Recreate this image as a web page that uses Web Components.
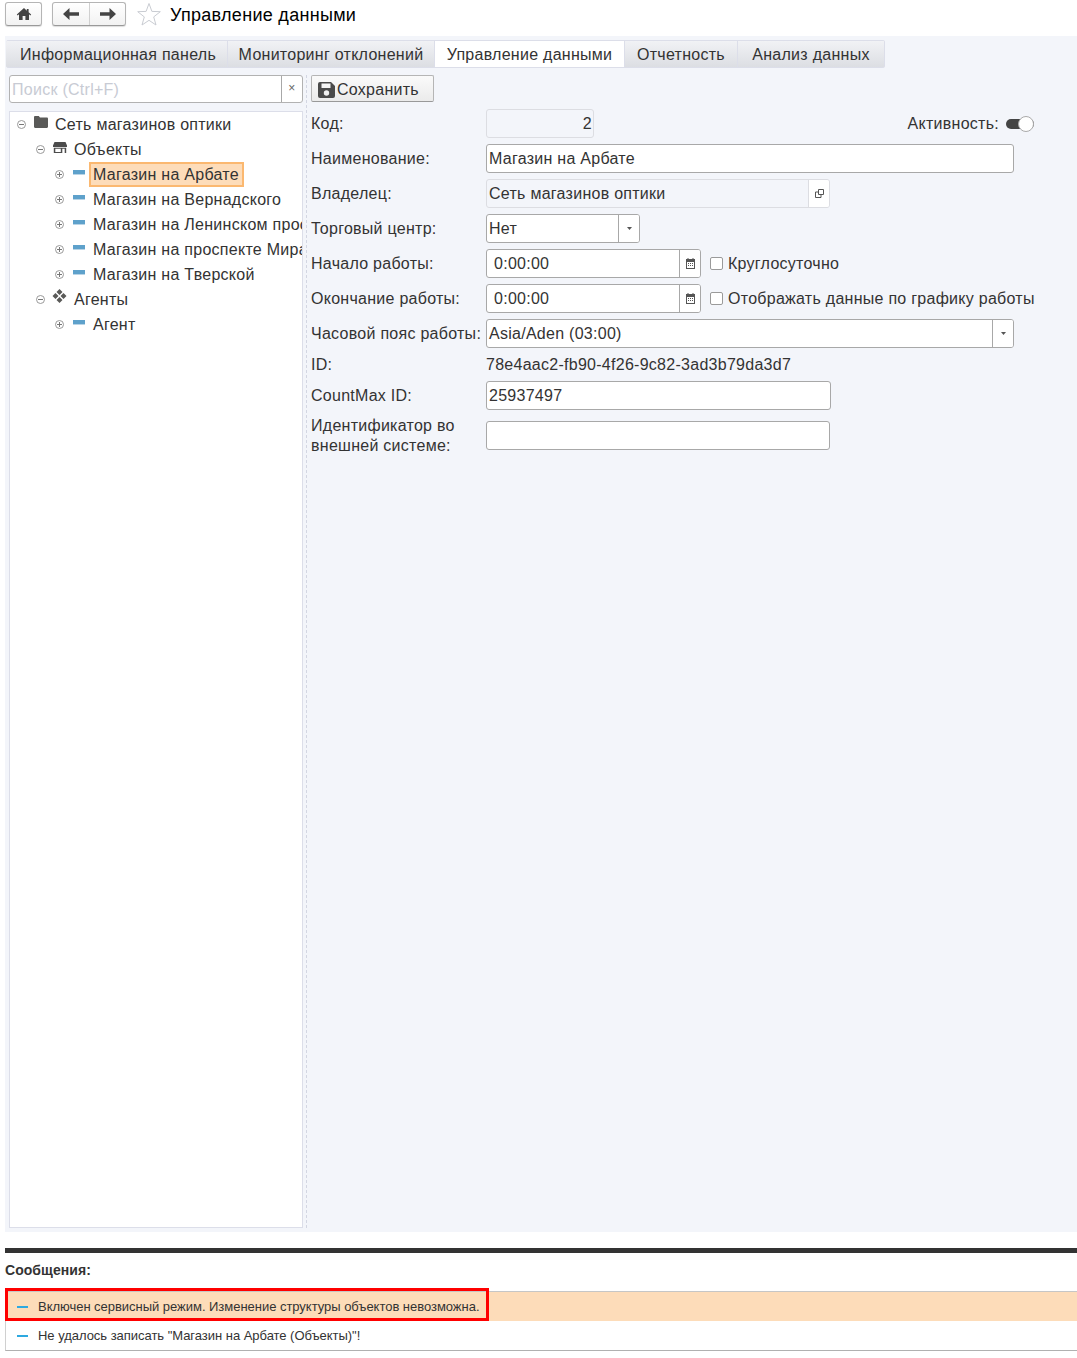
<!DOCTYPE html>
<html lang="ru">
<head>
<meta charset="utf-8">
<title>Управление данными</title>
<style>
  html, body { margin: 0; padding: 0; background: #fff; }
  body { width: 1077px; height: 1358px; overflow: hidden; font: 16px "Liberation Sans", Arial, sans-serif; letter-spacing: .27px; color: #333; }
</style>
</head>
<body>
<app-page>
  <top-bar slot="top" title-text="Управление данными"></top-bar>
  <section-tabs slot="tabs">
    <section-tab w="222" pad="3">Информационная панель</section-tab>
    <section-tab w="207">Мониторинг отклонений</section-tab>
    <section-tab w="190" active>Управление данными</section-tab>
    <section-tab w="113">Отчетность</section-tab>
    <section-tab w="147">Анализ данных</section-tab>
  </section-tabs>
  <search-box slot="left-top"></search-box>
  <tree-panel slot="left">
    <tree-node icon="folder" label="Сеть магазинов оптики" open>
      <tree-node icon="store" label="Объекты" open>
        <tree-node icon="dash" label="Магазин на Арбате" selected></tree-node>
        <tree-node icon="dash" label="Магазин на Вернадского"></tree-node>
        <tree-node icon="dash" label="Магазин на Ленинском проспекте"></tree-node>
        <tree-node icon="dash" label="Магазин на проспекте Мира"></tree-node>
        <tree-node icon="dash" label="Магазин на Тверской"></tree-node>
      </tree-node>
      <tree-node icon="diamonds" label="Агенты" open>
        <tree-node icon="dash" label="Агент"></tree-node>
      </tree-node>
    </tree-node>
  </tree-panel>
  <save-button slot="right-top">Сохранить</save-button>
  <data-form slot="right">
    <form-row label="Код:">
      <text-field w="108" align="right" disabled value="2"></text-field>
      <activity-switch slot="extra">Активность:</activity-switch>
    </form-row>
    <form-row label="Наименование:"><text-field w="528" value="Магазин на Арбате"></text-field></form-row>
    <form-row label="Владелец:"><text-field w="344" disabled value="Сеть магазинов оптики" btn="open"></text-field></form-row>
    <form-row label="Торговый центр:"><text-field w="154" value="Нет" btn="drop"></text-field></form-row>
    <form-row label="Начало работы:">
      <text-field w="215" indent value="0:00:00" btn="cal"></text-field>
      <check-field slot="extra">Круглосуточно</check-field>
    </form-row>
    <form-row label="Окончание работы:">
      <text-field w="215" indent value="0:00:00" btn="cal"></text-field>
      <check-field slot="extra">Отображать данные по графику работы</check-field>
    </form-row>
    <form-row label="Часовой пояс работы:"><text-field w="528" value="Asia/Aden (03:00)" btn="drop"></text-field></form-row>
    <form-row label="ID:" plain>78e4aac2-fb90-4f26-9c82-3ad3b79da3d7</form-row>
    <form-row label="CountMax ID:"><text-field w="345" value="25937497"></text-field></form-row>
    <form-row label="Идентификатор во внешней системе:" tall><text-field w="344" value=""></text-field></form-row>
  </data-form>
  <message-panel slot="bottom">
    <message-row hot>Включен сервисный режим. Изменение структуры объектов невозможна.</message-row>
    <message-row>Не удалось записать "Магазин на Арбате (Объекты)"!</message-row>
  </message-panel>
</app-page>

<script>
const ICONS = {
  home: '<svg width="16" height="14" viewBox="0 0 16 14"><path fill="#444" d="M8 1 .8 7.400l.9 1L3 7.300V13h3.600V9h2.800v4H13V7.300l1.300 1.100.9-1L12.600 5.300V2h-1.800v1.700z"/></svg>',
  back: '<svg width="16" height="12" viewBox="0 0 16 12"><path fill="#444" d="M6.500 0 0 6l6.500 6V7.700H16V4.300H6.500z"/></svg>',
  forward: '<svg width="16" height="12" viewBox="0 0 16 12"><path fill="#444" d="M9.500 0 16 6l-6.500 6V7.700H0V4.300h9.500z"/></svg>',
  star: '<svg width="24" height="24" viewBox="0 0 24 24"><path fill="#fff" stroke="#c9ccd2" d="m12 1.500 2.900 7.900 8.400.3-6.600 5.200 2.300 8.100L12 18.300 5 23l2.300-8.100L.7 9.700l8.400-.3z"/></svg>',
  save: '<svg width="17" height="16" viewBox="0 0 17 16"><path fill="#4a4a4a" fill-rule="evenodd" d="M2 0h11l4 4v10a2 2 0 0 1-2 2H2a2 2 0 0 1-2-2V2a2 2 0 0 1 2-2zm1.500 1.500V6h9V1.500zM8.500 8.300a2.700 2.700 0 1 0 0 5.400 2.700 2.700 0 0 0 0-5.400z"/></svg>',
  folder: '<svg width="14" height="12" viewBox="0 0 14 12"><path fill="#5a5a58" d="M0 1.200C0 .5.500 0 1.200 0h3.600l1.200 1.500h6.800c.7 0 1.200.5 1.200 1.200v8c0 .7-.5 1.200-1.200 1.200H1.200C.5 11.900 0 11.400 0 10.700z"/></svg>',
  store: '<svg width="14" height="11" viewBox="0 0 14 11"><path fill="#4c4c4c" fill-rule="evenodd" d="M1.500 0h11L14 3.500V5H0V3.500zM.8 5.800h12.400V11H.8zM2.300 6.800V10h5.500V6.800zm7 0V11h2.400V6.800z"/></svg>',
  diamonds: '<svg width="15" height="14" viewBox="0 0 15 14"><path fill="#5a5a58" d="m7.500 0 3 3-3 3-3-3zM3.500 4l3 3-3 3-3-3zM11.500 4l3 3-3 3-3-3zM7.500 8l3 3-3 3-3-3z"/></svg>',
  dash: '<svg width="12" height="5" viewBox="0 0 12 5" style="margin-left:1px"><rect width="12" height="4" y="0" fill="#5ea1cb"/><rect width="12" height="1" y="4" fill="#b9d4e6"/></svg>',
  plus: '<svg width="9" height="9" viewBox="0 0 9 9"><circle cx="4.500" cy="4.500" r="4" fill="#fff" stroke="#999"/><path stroke="#777" d="M2 4.500h5M4.500 2v5"/></svg>',
  minus: '<svg width="9" height="9" viewBox="0 0 9 9"><circle cx="4.500" cy="4.500" r="4" fill="#fff" stroke="#999"/><path stroke="#777" d="M2 4.500h5"/></svg>',
  drop: '<svg width="5" height="3" viewBox="0 0 5 3"><path fill="#555" d="M0 0h5L2.500 3z"/></svg>',
  cal: '<svg width="9" height="11" viewBox="0 0 9 11"><path fill="#555" fill-rule="evenodd" d="M1.500 0h1v1h4V0h1v1H9v10H0V1h1.500zM1 4v6h7V4z"/><path fill="#555" d="M2 5h1v1H2zM4 5h1v1H4zM6 5h1v1H6zM2 7h1v1H2zM4 7h1v1H4zM6 7h1v1H6z"/></svg>',
  open: '<svg width="9" height="9" viewBox="0 0 9 9"><path fill="none" stroke="#555" d="M3.500.5h5v5h-5zM3.500 3H.5v5.500H6V5.500"/></svg>',
};

const ICON_TOP = { dash: 8, diamonds: 2, store: 5, folder: 4 };

class AppPage extends HTMLElement {
  constructor() {
    super();
    this.attachShadow({ mode: 'open' });
    this.shadowRoot.innerHTML = `
      <style>
        :host { display: flex; flex-direction: column; width: 1077px; height: 1358px; }
        .work {
          margin: 0 0 0 5px;
          height: 1196px;
          background: #f3f5fa;
          padding: 4px 0 4px 1px;
          box-sizing: border-box;
          display: flex;
          flex-direction: column;
        }
        .split {
          flex: 1;
          min-height: 0;
          margin-top: 7px;
          display: grid;
          grid-template-columns: 294px 1fr;
          column-gap: 8px;
          padding-left: 3px;
        }
        .left { display: flex; flex-direction: column; gap: 8px; min-height: 0; }
        .right {
          display: flex;
          flex-direction: column;
          gap: 7px;
          border-left: 1px dashed #d3d6e2;
          margin-left: -5px;
          padding-left: 4px;
        }
      </style>
      <slot name="top"></slot>
      <div class="work">
        <slot name="tabs"></slot>
        <div class="split">
          <div class="left"><slot name="left-top"></slot><slot name="left"></slot></div>
          <div class="right"><slot name="right-top"></slot><slot name="right"></slot></div>
        </div>
      </div>
      <slot name="bottom"></slot>
    `;
  }
}

class TopBar extends HTMLElement {
  constructor() {
    super();
    this.attachShadow({ mode: 'open' });
    this.shadowRoot.innerHTML = `
      <style>
        :host { display: flex; align-items: center; height: 36px; box-sizing: border-box; padding: 0 0 8px 5px; }
        .btn {
          display: flex;
          align-items: center;
          height: 24px;
          border: 1px solid #b5b5b5;
          border-bottom-color: #999;
          border-radius: 3px;
          box-sizing: border-box;
          background: linear-gradient(#fff, #f2f2f2);
          box-shadow: 0 1px 1px #ddd;
        }
        .cell { display: flex; align-items: center; justify-content: center; height: 100%; box-sizing: border-box; }
        .home { width: 37px; margin-right: 10px; }
        .home .cell { width: 100%; }
        .nav .cell { width: 36px; }
        .nav .cell + .cell { border-left: 1px solid #d0d0d0; }
        .star { margin: 0 9px 0 11px; display: flex; }
        .title { font-size: 18px; letter-spacing: .3px; color: #000; margin-top: 2px; }
        svg { display: block; }
      </style>
      <div class="btn home"><span class="cell">${ICONS.home}</span></div>
      <div class="btn nav"><span class="cell">${ICONS.back}</span><span class="cell">${ICONS.forward}</span></div>
      <span class="star">${ICONS.star}</span>
      <span class="title">${this.getAttribute('title-text')}</span>
    `;
  }
}

class SectionTabs extends HTMLElement {
  constructor() {
    super();
    this.attachShadow({ mode: 'open' });
    this.shadowRoot.innerHTML = `
      <style>
        :host { display: block; }
        .bar { display: inline-flex; height: 28px; border-radius: 3px; overflow: hidden; box-shadow: inset 0 0 0 1px #dcdee9; }
      </style>
      <div class="bar"><slot></slot></div>
    `;
  }
}

class SectionTab extends HTMLElement {
  constructor() {
    super();
    this.attachShadow({ mode: 'open' });
    const active = this.hasAttribute('active');
    this.shadowRoot.innerHTML = `
      <style>
        :host {
          display: flex;
          align-items: center;
          justify-content: center;
          box-sizing: border-box;
          width: ${this.getAttribute('w')}px;
          height: 28px;
          padding: 2px 0 0 ${this.getAttribute('pad') || 0}px;
          white-space: nowrap;
          font-size: 16px;
          border: 1px solid #dcdee9;
          border-left-width: 0;
          background: ${active ? '#fff' : 'linear-gradient(#f1f2f5, #dcdee3)'};
        }
      </style>
      <slot></slot>
    `;
  }
}

class SearchBox extends HTMLElement {
  constructor() {
    super();
    this.attachShadow({ mode: 'open' });
    this.shadowRoot.innerHTML = `
      <style>
        :host {
          display: flex;
          height: 28px;
          box-sizing: border-box;
          border: 1px solid #b2b2b2;
          border-radius: 3px;
          background: #fff;
          overflow: hidden;
        }
        .ph { flex: 1; color: #c8cbd4; padding-left: 2px; line-height: 28px; }
        .clear {
          width: 20px;
          border-left: 1px solid #a8a8a8;
          color: #666;
          font-size: 12px;
          text-align: center;
          line-height: 25px;
        }
      </style>
      <span class="ph">Поиск (Ctrl+F)</span>
      <span class="clear">×</span>
    `;
  }
}

class TreePanel extends HTMLElement {
  constructor() {
    super();
    this.attachShadow({ mode: 'open' });
    this.shadowRoot.innerHTML = `
      <style>
        :host {
          display: block;
          height: 1117px;
          box-sizing: border-box;
          background: #fff;
          border: 1px solid #dcdee9;
          overflow: hidden;
          white-space: nowrap;
        }
      </style>
      <slot></slot>
    `;
  }
}

class TreeNode extends HTMLElement {
  constructor() {
    super();
    this.attachShadow({ mode: 'open' });
    const icon = this.getAttribute('icon');
    const open = this.hasAttribute('open');
    const selected = this.hasAttribute('selected');
    this.shadowRoot.innerHTML = `
      <style>
        :host { display: block; }
        .row { display: flex; align-items: center; height: 25px; padding-left: 7px; }
        .exp { width: 9px; height: 9px; flex: none; }
        .ico { width: 15px; margin-left: 7px; display: flex; justify-content: center; align-self: flex-start; padding-top: ${ICON_TOP[icon]}px; box-sizing: border-box; flex: none; }
        .txt { margin-left: 3px; padding: 0 3px 0 2px; line-height: 21px; border: 2px solid transparent; flex: none; }
        .sel { background: #fddcb9; border-color: #fbb870; }
        svg { display: block; }
        .kids { padding-left: 19px; }
      </style>
      <div class="row">
        <span class="exp">${ICONS[open ? 'minus' : 'plus']}</span>
        <span class="ico">${ICONS[icon]}</span>
        <span class="txt ${selected ? 'sel' : ''}">${this.getAttribute('label')}</span>
      </div>
      <div class="kids"><slot></slot></div>
    `;
  }
}

class SaveButton extends HTMLElement {
  constructor() {
    super();
    this.attachShadow({ mode: 'open' });
    this.shadowRoot.innerHTML = `
      <style>
        :host {
          display: flex;
          align-items: center;
          gap: 2px;
          width: 123px;
          height: 27px;
          box-sizing: border-box;
          padding: 2px 0 0 6px;
          border: 1px solid #b5b5b5;
          border-bottom-color: #999;
          border-radius: 2px;
          background: linear-gradient(#fafafa, #ebebeb);
        }
        svg { display: block; }
      </style>
      ${ICONS.save}<slot></slot>
    `;
  }
}

class DataForm extends HTMLElement {
  constructor() {
    super();
    this.attachShadow({ mode: 'open' });
    this.shadowRoot.innerHTML = `
      <style>
        :host { display: flex; flex-direction: column; gap: 6px; }
      </style>
      <slot></slot>
    `;
  }
}

class FormRow extends HTMLElement {
  constructor() {
    super();
    this.attachShadow({ mode: 'open' });
    const plain = this.hasAttribute('plain');
    const tall = this.hasAttribute('tall');
    this.shadowRoot.innerHTML = `
      <style>
        :host {
          display: grid;
          grid-template-columns: 175px 1fr;
          align-items: center;
          height: ${tall ? 39 : plain ? 21 : 29}px;
        }
        .label { line-height: ${tall ? 20 : 21}px; ${tall ? 'width: 160px;' : ''} white-space: ${tall ? 'normal' : 'nowrap'}; }
        .body { display: flex; align-items: center; min-width: 0; ${tall ? 'align-self: start; margin-top: 5px;' : ''} }
      </style>
      <div class="label">${this.getAttribute('label')}</div>
      <div class="body"><slot></slot><slot name="extra"></slot></div>
    `;
  }
}

class TextField extends HTMLElement {
  constructor() {
    super();
    this.attachShadow({ mode: 'open' });
    const disabled = this.hasAttribute('disabled');
    const btn = this.getAttribute('btn');
    const indent = this.hasAttribute('indent');
    this.shadowRoot.innerHTML = `
      <style>
        :host {
          display: flex;
          flex: none;
          box-sizing: border-box;
          width: ${this.getAttribute('w')}px;
          height: 29px;
          border: 1px solid ${disabled ? '#dcdde2' : '#a8a8a8'};
          border-radius: 3px;
          background: ${disabled ? '#f3f5fa' : '#fff'};
          overflow: hidden;
        }
        .val {
          flex: 1;
          min-width: 0;
          line-height: 27px;
          padding: 0 1px 0 ${indent ? 7 : 2}px;
          text-align: ${this.getAttribute('align') || 'left'};
          white-space: nowrap;
        }
        .btn {
          width: 20px;
          flex: none;
          display: flex;
          align-items: center;
          justify-content: center;
          background: #fff;
          border-left: 1px solid ${disabled ? '#dcdde2' : '#a8a8a8'};
        }
        svg { display: block; }
      </style>
      <span class="val">${this.getAttribute('value')}</span>
      ${btn ? `<span class="btn">${ICONS[btn]}</span>` : ''}
    `;
  }
}

class CheckField extends HTMLElement {
  constructor() {
    super();
    this.attachShadow({ mode: 'open' });
    this.shadowRoot.innerHTML = `
      <style>
        :host { display: flex; align-items: center; gap: 5px; margin-left: 9px; white-space: nowrap; }
        .box { width: 13px; height: 13px; box-sizing: border-box; border: 1px solid #9a9a9a; border-radius: 2px; background: #fff; }
      </style>
      <span class="box"></span><slot></slot>
    `;
  }
}

class ActivitySwitch extends HTMLElement {
  constructor() {
    super();
    this.attachShadow({ mode: 'open' });
    this.shadowRoot.innerHTML = `
      <style>
        :host { display: flex; align-items: center; gap: 7px; margin-left: auto; margin-right: 43px; white-space: nowrap; }
        .track { position: relative; display: block; width: 28px; height: 10px; background: #444; border-radius: 5px; }
        .knob {
          position: absolute;
          right: 0;
          top: -3px;
          width: 16px;
          height: 16px;
          box-sizing: border-box;
          border-radius: 50%;
          border: 1px solid #aaa;
          background: #fff;
        }
      </style>
      <slot></slot><span class="track"><span class="knob"></span></span>
    `;
  }
}

class MessagePanel extends HTMLElement {
  constructor() {
    super();
    this.attachShadow({ mode: 'open' });
    this.shadowRoot.innerHTML = `
      <style>
        :host { display: block; margin: 16px 0 0 5px; border-top: 5px solid #333; letter-spacing: 0; }
        .head { font-size: 14px; font-weight: bold; letter-spacing: .05px; color: #333; line-height: 16px; padding: 9px 0 13px; }
        .list { border-top: 1px solid #c6c6c6; border-bottom: 1px solid #b0b0b0; border-left: 1px solid #d0d0d0; position: relative; }
        .mark {
          position: absolute;
          left: -1px;
          top: -4px;
          width: 484px;
          height: 33px;
          box-sizing: border-box;
          border: 3px solid #f00;
        }
      </style>
      <div class="head">Сообщения:</div>
      <div class="list"><slot></slot><span class="mark"></span></div>
    `;
  }
}

class MessageRow extends HTMLElement {
  constructor() {
    super();
    this.attachShadow({ mode: 'open' });
    this.shadowRoot.innerHTML = `
      <style>
        :host {
          display: flex;
          align-items: center;
          height: 29px;
          box-sizing: border-box;
          padding-left: 11px;
          font-size: 13px;
          letter-spacing: -.03px;
          color: #333;
          background: ${this.hasAttribute('hot') ? '#fddcb9' : '#fff'};
        }
        .dash { width: 11px; height: 2px; background: #2ea9e0; margin-right: 10px; flex: none; }
      </style>
      <span class="dash"></span><slot></slot>
    `;
  }
}

customElements.define('app-page', AppPage);
customElements.define('top-bar', TopBar);
customElements.define('section-tabs', SectionTabs);
customElements.define('section-tab', SectionTab);
customElements.define('search-box', SearchBox);
customElements.define('tree-panel', TreePanel);
customElements.define('tree-node', TreeNode);
customElements.define('save-button', SaveButton);
customElements.define('data-form', DataForm);
customElements.define('form-row', FormRow);
customElements.define('text-field', TextField);
customElements.define('check-field', CheckField);
customElements.define('activity-switch', ActivitySwitch);
customElements.define('message-panel', MessagePanel);
customElements.define('message-row', MessageRow);
</script>
</body>
</html>
